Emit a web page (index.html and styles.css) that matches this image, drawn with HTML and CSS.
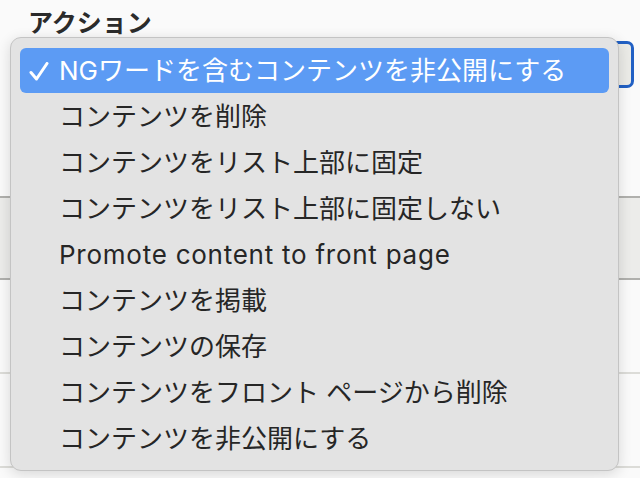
FILE: index.html
```html
<!DOCTYPE html>
<html lang="ja">
<head>
    <meta charset="UTF-8">
    <meta name="viewport" content="width=device-width, initial-scale=1.0">
    <title>アクション</title>
    <link rel="stylesheet" href="styles.css">
</head>
<body>
    <div class="page">
        <h1 class="label">アクション</h1>
        <div class="select-box"></div>
        <div class="table">
            <div class="table-head"></div>
            <div class="table-row"></div>
            <div class="table-row"></div>
        </div>
    </div>

    <!-- Popup menu of the action select -->
    <ul class="menu">
        <li class="menu-item selected">
            <svg class="check" width="20" height="20" viewBox="0 0 20 20">
                <polyline points="2,10.5 7.5,17 18,1.5" fill="none" stroke="#fff" stroke-width="3" stroke-linecap="round" stroke-linejoin="round"/>
            </svg>
            NGワードを含むコンテンツを非公開にする
        </li>
        <li class="menu-item">コンテンツを削除</li>
        <li class="menu-item">コンテンツをリスト上部に固定</li>
        <li class="menu-item">コンテンツをリスト上部に固定しない</li>
        <li class="menu-item latin">Promote content to front page</li>
        <li class="menu-item">コンテンツを掲載</li>
        <li class="menu-item">コンテンツの保存</li>
        <li class="menu-item">コンテンツをフロント ページから削除</li>
        <li class="menu-item">コンテンツを非公開にする</li>
    </ul>
</body>
</html>
```

FILE: styles.css
```css
body {
    margin: 0;
    background-color: #fafafa;
    font-family: "Inter", "Noto Sans CJK JP", sans-serif;
    color: #262626;
    overflow: hidden;
}

.page {
    height: 478px;
}

.label {
    margin: 0;
    padding: 6px 0 0 28px;
    height: 41px;
    box-sizing: border-box;
    font-size: 25px;
    line-height: 34px;
    font-weight: bold;
    color: #2b2b2b;
}

.select-box {
    margin-left: 20px;
    width: 614px;
    height: 47px;
    box-sizing: border-box;
    border: 3px solid #2160c4;
    border-radius: 7px;
    background-color: #ebebe7;
}

.table {
    margin-top: 108px;
}

.table-head {
    height: 84px;
    box-sizing: border-box;
    border-top: 2px solid #b0b0ad;
    border-bottom: 2px solid #b0b0ad;
    background-color: #ececea;
}

.table-row {
    height: 94px;
    box-sizing: border-box;
    border-bottom: 2px solid #dcdcd8;
}

.menu {
    position: absolute;
    left: 10px;
    top: 37px;
    width: 609px;
    margin: 0;
    padding: 10px 9px 8px 9px;
    list-style: none;
    box-sizing: border-box;
    background-color: #e3e3e3;
    border: 1px solid #c4c4c4;
    border-radius: 11px;
    box-shadow: 0 3px 14px rgba(0, 0, 0, 0.14);
}

.menu-item {
    position: relative;
    height: 46px;
    padding-left: 39px;
    font-size: 26px;
    line-height: 46px;
    white-space: nowrap;
}

.menu-item.latin {
    letter-spacing: 0.75px;
}

.menu-item.selected {
    height: 45px;
    line-height: 45px;
    margin-bottom: 1px;
    background-color: #5c9bf4;
    border-radius: 6px;
    color: #fff;
}

.check {
    position: absolute;
    left: 9px;
    top: 14px;
}
```
